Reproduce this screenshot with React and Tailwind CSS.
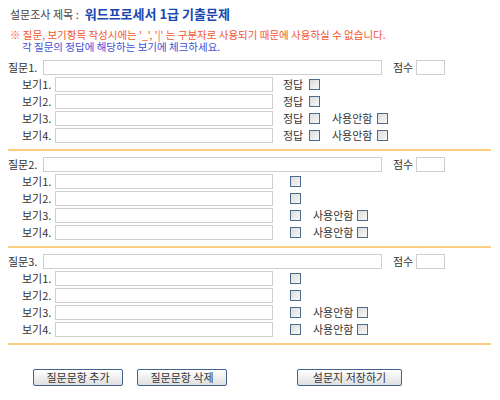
import React from "react";

const font = { fontFamily: '"Noto Sans CJK KR", "Noto Sans", sans-serif' };

const Box = () => (
  <span className="inline-block w-[11px] h-[11px] border border-[#4d6c8c] bg-gradient-to-br from-[#dcdcdc] to-[#f8f8f8]" />
);

const Question = ({ n, answer }) => (
  <div className="flex flex-col gap-[2px]">
    <div className="flex items-center h-[15px]">
      <span className="w-[35px] text-[11px] text-[#333]">질문{n}.</span>
      <input className="w-[339px] h-[15px] border border-[#cfcfcf] bg-white" />
      <span className="ml-[11px] w-[22px] text-[11px] text-[#333] whitespace-nowrap">점수</span>
      <input className="ml-[1px] w-[29px] h-[15px] border border-[#cfcfcf] bg-white" />
    </div>
    {[1, 2, 3, 4].map((i) => (
      <div key={i} className="flex items-center h-[15px]">
        <span className="ml-[14px] w-[33px] text-[11px] text-[#333]">보기{i}.</span>
        <input className="w-[218px] h-[15px] border border-[#cfcfcf] bg-white" />
        {answer ? (
          <>
            <span className="ml-[10px] w-[26px] text-[11px] text-[#333]">정답</span>
            <Box />
            {i > 2 && (
              <>
                <span className="ml-[12px] w-[45px] text-[11px] text-[#333]">사용안함</span>
                <Box />
              </>
            )}
          </>
        ) : (
          <>
            <span className="ml-[17px]" />
            <Box />
            {i > 2 && (
              <>
                <span className="ml-[12px] w-[44px] text-[11px] text-[#333]">사용안함</span>
                <Box />
              </>
            )}
          </>
        )}
      </div>
    ))}
  </div>
);

const Btn = ({ children, w }) => (
  <button className={`${w} h-[17px] border border-[#42628e] rounded-[2px] bg-gradient-to-b from-white to-[#dedede] text-[11px] text-[#333] leading-none`}>
    {children}
  </button>
);

export default function App() {
  return (
    <div className="w-[500px] h-[400px] bg-white pl-[8px] pt-[6px]" style={font}>
      <div className="flex items-center h-[16px] pl-[2px]">
        <span className="text-[11px] text-[#444]">설문조사 제목 :</span>
        <span className="ml-[6px] text-[13px] font-bold text-[#1a46b0]">워드프로세서 1급 기출문제</span>
      </div>
      <div className="mt-[7px] pl-[2px] text-[10.5px] leading-[12px]">
        <div className="text-[#f4562e]">※ 질문, 보기항목 작성시에는 '_', '|' 는 구분자로 사용되기 때문에 사용하실 수 없습니다.</div>
        <div className="pl-[12px] text-[#3f4fd6]">각 질문의 정답에 해당하는 보기에 체크하세요.</div>
      </div>
      <div className="mt-[7px] flex flex-col w-[483px]">
        <Question n={1} answer />
        <div className="my-[6px] h-[2px] bg-[#fcce80]" />
        <Question n={2} />
        <div className="my-[6px] h-[2px] bg-[#fcce80]" />
        <Question n={3} />
        <div className="my-[6px] h-[2px] bg-[#fcce80]" />
      </div>
      <div className="mt-[18px] flex">
        <span className="ml-[25px]" />
        <Btn w="w-[90px]">질문문항 추가</Btn>
        <span className="ml-[14px]" />
        <Btn w="w-[90px]">질문문항 삭제</Btn>
        <span className="ml-[70px]" />
        <Btn w="w-[105px]">설문지 저장하기</Btn>
      </div>
    </div>
  );
}
